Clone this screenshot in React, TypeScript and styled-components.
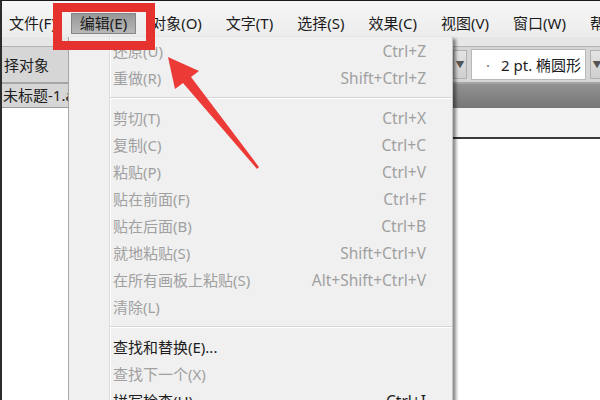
import React from "react";
import styled, { createGlobalStyle } from "styled-components";

const GlobalStyle = createGlobalStyle`
  html, body { margin: 0; padding: 0; }
  body {
    width: 600px;
    height: 400px;
    overflow: hidden;
    background: #ffffff;
    font-family: "Noto Sans", "Noto Sans CJK SC", sans-serif;
  }
`;

const Page = styled.div`
  position: relative;
  width: 600px;
  height: 400px;
  overflow: hidden;
  box-sizing: border-box;
  border-top: 1px solid #1c1c1c;
  border-left: 2px solid #2c2c2c;
  display: flex;
  flex-direction: column;
  background: #ffffff;
`;

const MenuBar = styled.div`
  height: 36px;
  flex: none;
  display: flex;
  align-items: flex-end;
  padding-bottom: 3px;
  box-sizing: border-box;
  background: linear-gradient(#f6f6f6, #ececec);
`;

const MenuTitle = styled.div<{ $active?: boolean }>`
  height: 21px;
  line-height: 19px;
  margin: 0 3px;
  padding: 0 8px;
  font-size: 15px;
  color: #1b1b1b;
  white-space: nowrap;
  box-sizing: border-box;
  border: 1px solid ${(p) => (p.$active ? "#868686" : "transparent")};
  background: ${(p) =>
    p.$active ? "linear-gradient(#979797, #b8b8b8)" : "transparent"};
  &:first-child {
    margin-left: 0;
    padding-left: 6px;
  }
`;

const ThinStrip = styled.div`
  height: 9px;
  flex: none;
  background: #e6e6e6;
  border-bottom: 1px solid #b4b4b4;
`;

const Toolbar = styled.div`
  height: 35px;
  flex: none;
  display: flex;
  align-items: center;
  justify-content: space-between;
  background: #d6d6d6;
  border-bottom: 1px solid #a6a6a6;
  overflow: hidden;
`;

const ToolLabel = styled.div`
  font-size: 15px;
  color: #1e1e1e;
  padding-left: 2px;
  white-space: nowrap;
`;

const ToolGroup = styled.div`
  display: flex;
  align-items: center;
  gap: 4px;
  margin-right: -4px;
`;

const ArrowButton = styled.div<{ $w: number }>`
  width: ${(p) => p.$w}px;
  height: 29px;
  display: flex;
  align-items: center;
  justify-content: center;
  font-size: 9px;
  color: #555;
  background: linear-gradient(#e4e4e4, #cfcfcf);
  border: 1px solid #b0b0b0;
  box-sizing: border-box;
`;

const Field = styled.div`
  width: 115px;
  height: 31px;
  box-sizing: border-box;
  background: #ffffff;
  border: 1px solid #b8b8b8;
  display: flex;
  align-items: center;
  padding-left: 14px;
  gap: 11px;
  font-size: 15px;
  color: #1e1e1e;
  white-space: nowrap;
  overflow: hidden;
`;

const Dot = styled.span`
  color: #777;
`;

const TabBar = styled.div`
  height: 25px;
  flex: none;
  display: flex;
  background: linear-gradient(#929292, #767676);
  border-top: 1px solid #a4a4a4;
  box-sizing: border-box;
`;

const DocTab = styled.div`
  width: 68px;
  box-sizing: border-box;
  background: #d6d6d6;
  border-right: 1px solid #8c8c8c;
  border-bottom: 1px solid #9c9c9c;
  font-size: 15px;
  line-height: 23px;
  color: #1e1e1e;
  padding-left: 1px;
  white-space: nowrap;
  overflow: hidden;
`;

const Workspace = styled.div`
  flex: 1;
  display: flex;
`;

const SidePane = styled.div`
  width: 67px;
  flex: none;
  background: #ffffff;
  border-right: 1px solid #9c9c9c;
`;

const MainPane = styled.div`
  flex: 1;
  display: flex;
  flex-direction: column;
`;

const RulerStrip = styled.div`
  height: 29px;
  flex: none;
  background: #f3f3f3;
  border-bottom: 2px solid #3a3a3a;
`;

const Canvas = styled.div`
  flex: 1;
  background: #ffffff;
`;

const Menu = styled.div`
  position: absolute;
  left: 66px;
  top: 36px;
  width: 385px;
  height: 390px;
  box-sizing: border-box;
  border-left: 1px solid #a6a6a6;
  border-right: 1px solid #c4c4c4;
  box-shadow: 3px 2px 3px rgba(0, 0, 0, 0.45);
  background:
    linear-gradient(
      to right,
      transparent 40px,
      #dcdcdc 40px,
      #dcdcdc 41px,
      #ffffff 41px,
      #ffffff 42px,
      transparent 42px
    ),
    #f0f0f0;
  display: flex;
  flex-direction: column;
`;

const Item = styled.div<{ $enabled?: boolean }>`
  height: 27px;
  flex: none;
  display: flex;
  align-items: center;
  justify-content: space-between;
  padding: 0 26px 0 44px;
  font-size: 15px;
  white-space: nowrap;
  color: ${(p) => (p.$enabled ? "#1d1d1d" : "#a0a0a0")};
`;

const Shortcut = styled.span`
  font-size: 15.5px;
`;

const Separator = styled.div`
  height: 13px;
  flex: none;
  margin-left: 41px;
  display: flex;
  align-items: center;
  &::before {
    content: "";
    flex: 1;
    height: 1px;
    border-bottom: 1px solid #ffffff;
    background: #d6d6d6;
  }
`;

const Highlight = styled.div`
  position: absolute;
  left: 51px;
  top: 2px;
  width: 102px;
  height: 47px;
  box-sizing: border-box;
  border: 9px solid #e6322f;
  pointer-events: none;
`;

const Overlay = styled.svg`
  position: absolute;
  left: -2px;
  top: -1px;
  width: 600px;
  height: 400px;
  pointer-events: none;
`;

type Entry = { label: string; key?: string; enabled?: boolean } | "sep";

const entries: Entry[] = [
  { label: "还原(U)", key: "Ctrl+Z" },
  { label: "重做(R)", key: "Shift+Ctrl+Z" },
  "sep",
  { label: "剪切(T)", key: "Ctrl+X" },
  { label: "复制(C)", key: "Ctrl+C" },
  { label: "粘贴(P)", key: "Ctrl+V" },
  { label: "贴在前面(F)", key: "Ctrl+F" },
  { label: "贴在后面(B)", key: "Ctrl+B" },
  { label: "就地粘贴(S)", key: "Shift+Ctrl+V" },
  { label: "在所有画板上粘贴(S)", key: "Alt+Shift+Ctrl+V" },
  { label: "清除(L)" },
  "sep",
  { label: "查找和替换(E)...", enabled: true },
  { label: "查找下一个(X)" },
  { label: "拼写检查(H)...", key: "Ctrl+I", enabled: true },
];

const titles = [
  "文件(F)",
  "编辑(E)",
  "对象(O)",
  "文字(T)",
  "选择(S)",
  "效果(C)",
  "视图(V)",
  "窗口(W)",
  "帮助(H)",
];

export default function App() {
  return (
    <>
      <GlobalStyle />
      <Page>
        <MenuBar>
          {titles.map((t) => (
            <MenuTitle key={t} $active={t === "编辑(E)"}>
              {t}
            </MenuTitle>
          ))}
        </MenuBar>
        <ThinStrip />
        <Toolbar>
          <ToolLabel>择对象</ToolLabel>
          <ToolGroup>
            <ArrowButton $w={14}>▼</ArrowButton>
            <Field>
              <Dot>·</Dot>
              <span>2 pt. 椭圆形</span>
            </Field>
            <ArrowButton $w={14}>▼</ArrowButton>
          </ToolGroup>
        </Toolbar>
        <TabBar>
          <DocTab>未标题-1.ai</DocTab>
        </TabBar>
        <Workspace>
          <SidePane />
          <MainPane>
            <RulerStrip />
            <Canvas />
          </MainPane>
        </Workspace>

        <Menu>
          {entries.map((e, i) =>
            e === "sep" ? (
              <Separator key={i} />
            ) : (
              <Item key={i} $enabled={e.enabled}>
                <span>{e.label}</span>
                {e.key && <Shortcut>{e.key}</Shortcut>}
              </Item>
            )
          )}
        </Menu>

        <Highlight />
        <Overlay viewBox="0 0 600 400">
          <polygon
            points="168,57 199,71 191,77 259,167 257,169 183,83 175,89"
            fill="#ec3a37"
          />
        </Overlay>
      </Page>
    </>
  );
}
